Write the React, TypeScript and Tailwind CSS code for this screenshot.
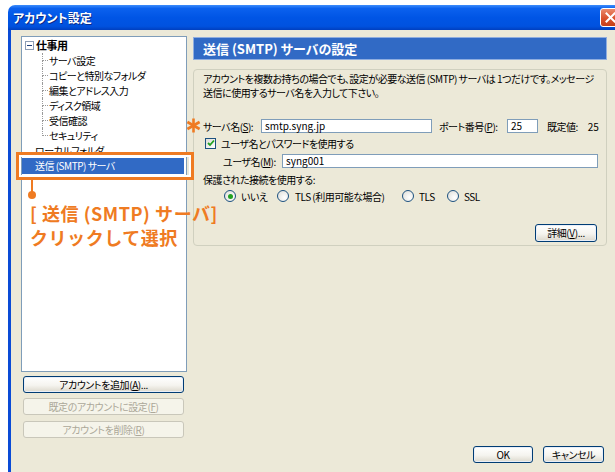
import React from 'react';

const jp = "font-['Noto_Sans_CJK_JP','Noto_Sans_CJK_SC',sans-serif] [font-feature-settings:'palt']";

const subItems = ['サーバ設定', 'コピーと特別なフォルダ', '編集とアドレス入力', 'ディスク領域', '受信確認', 'セキュリティ'];

const XpButton = ({ children, disabled, className = '' }: { children: React.ReactNode; disabled?: boolean; className?: string }) => (
  <div
    className={`flex items-center justify-center rounded-[3px] border text-[10px] tracking-[-0.4px] leading-none whitespace-nowrap ${
      disabled
        ? 'border-[#C9C7BA] bg-[#F5F4EA] text-[#ACA899]'
        : 'border-[#003C74] bg-[linear-gradient(to_bottom,#FFFFFF,#F5F4EF_55%,#DCD8CC)] text-black shadow-[inset_0_0_0_1px_#E8EEF8]'
    } ${className}`}
  >
    {children}
  </div>
);

const TextField = ({ value, className = '' }: { value: string; className?: string }) => (
  <div className={`h-[14px] shrink-0 border border-[#7F9DB9] bg-white pl-[3px] text-[10px] tracking-normal leading-[12px] ${className}`}>{value}</div>
);

const Radio = ({ checked }: { checked?: boolean }) => (
  <div className="w-[12px] h-[12px] shrink-0 rounded-full border border-[#1C5180] bg-[radial-gradient(circle_at_65%_65%,#FFFFFF,#DCDCD6)] flex items-center justify-center">
    {checked && <div className="w-[5px] h-[5px] rounded-full bg-[#21A121]" />}
  </div>
);

const TreeRow = ({ label, last }: { label: string; last?: boolean }) => (
  <div className="flex h-[15px]">
    <div className="w-[6px] flex flex-col">
      <div className="h-[8px] border-l border-b border-dotted border-[#9A9A9A]" />
      {!last && <div className="flex-1 border-l border-dotted border-[#9A9A9A]" />}
    </div>
    <span className="pl-[1px] leading-[15px] whitespace-nowrap">{label}</span>
  </div>
);

// six-armed asterisk used as the "required" marker
const Asterisk = () => (
  <svg width="15" height="15" viewBox="0 0 15 15">
    <g stroke="#EF7B22" strokeWidth="2.6" strokeLinecap="butt">
      <path d="M7.5 0.5 L7.5 14.5" />
      <path d="M1.4 4 L13.6 11" />
      <path d="M1.4 11 L13.6 4" />
    </g>
  </svg>
);

export default function App() {
  return (
    <div className={`w-[615px] h-[472px] overflow-hidden bg-white pl-[8px] pt-[5px] ${jp}`}>
      <div className="w-[640px] h-full flex flex-col">
        {/* title bar */}
        <div className="h-[25px] rounded-t-[7px] bg-[linear-gradient(to_bottom,#3C8CFB_0%,#0B61EE_14%,#0055E5_50%,#0052DF_85%,#003FBF_100%)] flex items-center pl-[5px]">
          <span className="w-[587px] text-white text-[12px] font-bold [text-shadow:1px_1px_0_#0A2C8A]">アカウント設定</span>
          <div className="w-[21px] h-[19px] rounded-[3px] border border-white bg-[linear-gradient(to_bottom,#EA8A6C,#D9522D_55%,#C43E1A)] flex items-center justify-center">
            <svg width="11" height="11" viewBox="0 0 11 11">
              <path d="M1.5 1.5 L9.5 9.5 M9.5 1.5 L1.5 9.5" stroke="white" strokeWidth="2" strokeLinecap="square" />
            </svg>
          </div>
        </div>

        {/* window body */}
        <div className="flex-1 flex border-l-[3px] border-[#0A4BD6] bg-[#ECE9D8] relative text-[10px] tracking-[-0.5px]">
          {/* left: account tree */}
          <div className="w-[182px] pl-[10px] pt-[6px] flex flex-col">
            <div className="w-[166px] h-[336px] border border-[#7F9DB9] bg-white pt-[1px]">
              <div className="flex items-center h-[15px] pl-[3px]">
                <div className="w-[9px] h-[9px] border border-[#8C9DB5] bg-white flex items-center justify-center">
                  <div className="w-[5px] h-[1px] bg-[#1C3E7A]" />
                </div>
                <span className="pl-[2px] text-[11px] font-bold leading-[15px]">仕事用</span>
              </div>
              <div className="ml-[20px]">
                {subItems.map((s, i) => (
                  <TreeRow key={s} label={s} last={i === subItems.length - 1} />
                ))}
              </div>
              <div className="h-[15px] pl-[13px] leading-[15px]">ローカルフォルダ</div>
              <div className="h-[16px] mr-[2px] bg-[#316AC5] pl-[13px] leading-[16px] text-white">送信 (SMTP) サーバ</div>
            </div>
            <div className="mt-[4px] pl-[2px] flex flex-col gap-[5px]">
              <XpButton className="w-[161px] h-[17px]">
                アカウントを追加(<u>A</u>)...
              </XpButton>
              <XpButton disabled className="w-[161px] h-[17px]">
                既定のアカウントに設定(<u>F</u>)
              </XpButton>
              <XpButton disabled className="w-[161px] h-[17px] mt-[1px]">
                アカウントを削除(<u>R</u>)
              </XpButton>
            </div>
          </div>

          {/* right: SMTP settings */}
          <div className="w-[414px] pt-[7px] flex flex-col">
            <div className="h-[23px] border border-[#8FADDF] bg-[#316AC5] flex items-center pl-[9px]">
              <span className="text-white text-[13px] tracking-normal font-bold">送信 (SMTP) サーバの設定</span>
            </div>

            <div className="mt-[9px] rounded-[4px] border border-[#D0D0BF] pb-[3px]">
              <div className="pl-[9px] pt-[2px] leading-[14px] whitespace-nowrap tracking-[-0.5px]">
                <div>アカウントを複数お持ちの場合でも、設定が必要な送信 (SMTP) サーバは 1つだけです。メッセージ</div>
                <div>送信に使用するサーバ名を入力して下さい。</div>
              </div>

              <div className="mt-[19px] flex items-center h-[14px] pl-[9px] relative whitespace-nowrap">
                <div className="absolute left-[-8px] top-[-1px]">
                  <Asterisk />
                </div>
                <span className="w-[58px] shrink-0">サーバ名(<u>S</u>):</span>
                <TextField value="smtp.syng.jp" className="w-[171px]" />
                <span className="ml-[7px] w-[68px] shrink-0">ポート番号(<u>P</u>):</span>
                <TextField value="25" className="w-[31px]" />
                <span className="ml-[9px]">既定値:</span>
                <span className="ml-[10px] tracking-normal">25</span>
              </div>

              <div className="mt-[4px] flex items-center h-[12px] pl-[11px] whitespace-nowrap">
                <div className="w-[11px] h-[11px] border border-[#1C5180] bg-[linear-gradient(135deg,#DCDCD6,#FFFFFF)] flex items-center justify-center">
                  <svg width="8" height="8" viewBox="0 0 8 8">
                    <path d="M1 4 L3 6 L7 1.5" stroke="#21A121" strokeWidth="1.8" fill="none" />
                  </svg>
                </div>
                <span className="pl-[5px]">ユーザ名とパスワードを使用する</span>
              </div>

              <div className="mt-[5px] flex items-center h-[14px] pl-[29px] whitespace-nowrap">
                <span className="w-[59px] shrink-0">ユーザ名(<u>M</u>):</span>
                <TextField value="syng001" className="w-[316px]" />
              </div>

              <div className="mt-[5px] pl-[9px] leading-[14px]">保護された接続を使用する:</div>

              <div className="mt-[2px] flex items-center h-[14px] pl-[30px] whitespace-nowrap">
                <div className="w-[53px] flex items-center gap-[5px]">
                  <Radio checked />
                  <span>いいえ</span>
                </div>
                <div className="w-[125px] flex items-center gap-[6px]">
                  <Radio />
                  <span>TLS (利用可能な場合)</span>
                </div>
                <div className="w-[45px] flex items-center gap-[5px]">
                  <Radio />
                  <span>TLS</span>
                </div>
                <div className="flex items-center gap-[5px]">
                  <Radio />
                  <span>SSL</span>
                </div>
              </div>

              <div className="mt-[21px] flex justify-end pr-[9px]">
                <XpButton className="w-[62px] h-[18px]">
                  詳細(<u>V</u>)...
                </XpButton>
              </div>
            </div>

            <div className="mt-auto mb-[9px] flex justify-end gap-[10px] pr-[3px]">
              <XpButton className="w-[60px] h-[17px] shadow-[inset_0_0_0_1px_#A8C4EE]">OK</XpButton>
              <XpButton className="w-[61px] h-[17px]">キャンセル</XpButton>
            </div>
          </div>

          {/* callout over the tree */}
          <div className="absolute left-[5px] top-[122px] w-[178px] h-[28px] border-[3px] border-[#EF7B22] shadow-[inset_0_0_0_2px_white]" />
          <div className="absolute left-[20px] top-[150px] w-[2px] h-[14px] bg-[#EF7B22]" />
          <div className="absolute left-[17px] top-[161px] w-[8px] h-[8px] rounded-full bg-[#EF7B22]" />
          <div className="absolute left-[19px] top-[171px] text-[#EF7B22] text-[18px] tracking-[0.55px] font-bold leading-[24px] [font-feature-settings:normal] whitespace-nowrap">
            <div>[ 送信 (SMTP) サーバ]</div>
            <div>クリックして選択</div>
          </div>
        </div>
      </div>
    </div>
  );
}
